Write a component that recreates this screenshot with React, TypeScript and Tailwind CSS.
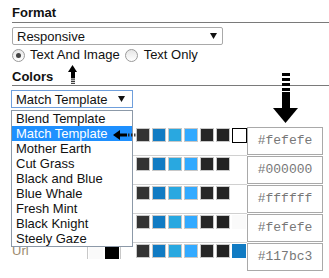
import React from "react";

const themes = [
  "Blend Template",
  "Match Template",
  "Mother Earth",
  "Cut Grass",
  "Black and Blue",
  "Blue Whale",
  "Fresh Mint",
  "Black Knight",
  "Steely Gaze",
];

const base = ["#333333", "#117bc3", "#29a8e0", "#33aaff", "#262626", "#222222"];

interface Row {
  id: string;
  label: string; // rows hidden behind the open list keep no label
  small: string[];
  last: string; // last swatch colour, "" = none
  hex: string;
}

const rows: Row[] = [
  { id: "bg", label: "", small: ["#fafafa", "#000000"], last: "sel", hex: "#fefefe" },
  { id: "border", label: "", small: ["#fafafa", "#000000"], last: "", hex: "#000000" },
  { id: "title", label: "", small: ["#fafafa", "#000000"], last: "", hex: "#ffffff" },
  { id: "text", label: "", small: ["#fafafa", "#000000"], last: "#fafafa", hex: "#fefefe" },
  { id: "url", label: "Url", small: ["#fafafa", "#000000"], last: "#117bc3", hex: "#117bc3" },
];

function Caret() {
  return (
    <svg width="7" height="6" viewBox="0 0 7 6">
      <polygon points="0,0 7,0 3.5,6" fill="#111" />
    </svg>
  );
}

function Radio({ checked }: { checked?: boolean }) {
  return (
    <span className="flex h-[13px] w-[13px] shrink-0 items-center justify-center rounded-full border border-[#9a9a9a] bg-gradient-to-b from-[#e6e6e6] to-white">
      {checked && <span className="h-[5px] w-[5px] rounded-full bg-[#444]" />}
    </span>
  );
}

export default function App() {
  return (
    <div
      className="relative h-[278px] w-[329px] overflow-hidden bg-white text-[13px] text-[#111]"
      style={{ fontFamily: '"Liberation Sans", Arial, sans-serif' }}
    >
      <div className="flex flex-col pl-[12px]">
        <div className="mt-[5px] border-b border-[#7a7a7a] pb-[2px] font-bold leading-[15px]">Format</div>

        <div className="mt-[4px] flex h-[18px] w-[211px] items-center justify-between rounded-[2px] border border-[#a9a9a9] pl-[4px] pr-[5px] leading-[15px]">
          <span>Responsive</span>
          <Caret />
        </div>

        <div className="mt-[3px] flex h-[14px] items-center leading-[14px]">
          <Radio checked />
          <span className="ml-[5px]">Text And Image</span>
          <span className="ml-[5px]">
            <Radio />
          </span>
          <span className="ml-[6px]">Text Only</span>
        </div>

        <div className="mt-[7px] border-b border-[#7a7a7a] pb-[1px] font-bold leading-[15px]">Colors</div>

        <div className="ml-[-1px] mt-[4px] flex h-[18px] w-[122px] items-center justify-between border border-[#6f9fdc] pl-[4px] pr-[7px] leading-[15px]">
          <span>Match Template</span>
          <Caret />
        </div>

        <div className="mt-[19px] flex flex-col">
          {rows.map((r, i) => (
            <div key={r.id} className="flex h-[29px] items-start">
              <div className="w-[75px] shrink-0 leading-[15px] text-[#9c8a6e]">{r.label}</div>
              <div className="mt-[2px] flex h-[14px] shrink-0 gap-[2px] border-x border-[#c8c8c8] px-[1px]">
                {r.small.map((c, j) => (
                  <span key={j} className="h-[14px] w-[14px]" style={{ background: c }} />
                ))}
              </div>
              <div
                className={`ml-[11px] flex h-[29px] w-[115px] shrink-0 gap-[2px] pl-[4px] pt-[1px] ${
                  i < rows.length - 1 ? "border-b border-[#d0d0d0]" : ""
                }`}
              >
                {base.map((c) => (
                  <span key={c} className="h-[14px] w-[14px] border border-[#c8c8c8]" style={{ background: c }} />
                ))}
                {r.last === "sel" ? (
                  <span className="h-[15px] w-[15px] border border-black bg-white" />
                ) : (
                  <span className="h-[14px] w-[14px]" style={{ background: r.last || "transparent" }} />
                )}
              </div>
              <div
                className="h-[28px] w-[76px] shrink-0 border border-[#a9a9a9] text-center text-[13px] leading-[26px] text-[#777]"
                style={{ fontFamily: '"Liberation Mono", "Courier New", monospace' }}
              >
                {r.hex}
              </div>
            </div>
          ))}
        </div>
      </div>

      {/* open dropdown list */}
      <ul className="absolute left-[11px] top-[110px] w-[122px] border border-[#8c99a8] bg-white leading-[15px]">
        {themes.map((t) => (
          <li
            key={t}
            className={`h-[15px] pl-[4px] ${t === "Match Template" ? "bg-[#1e90ff] text-white" : "text-[#111]"}`}
          >
            {t}
          </li>
        ))}
      </ul>

      {/* annotation arrows */}
      <svg className="absolute left-[68px] top-[65px]" width="10" height="19" viewBox="0 0 10 19">
        <polygon points="4.5,0 9,7 0,7" fill="#000" />
        <rect x="3" y="7" width="4" height="6" fill="#000" />
        <rect x="3" y="13.5" width="4" height="1.2" fill="#222" />
        <rect x="3" y="15.7" width="4" height="1.2" fill="#222" />
        <rect x="3" y="17.8" width="4" height="1.2" fill="#444" />
      </svg>

      <svg className="absolute left-[273px] top-[72px]" width="26" height="52" viewBox="0 0 26 52">
        <rect x="9" y="1" width="8" height="3" fill="#000" />
        <rect x="9" y="6" width="8" height="3" fill="#000" />
        <rect x="9" y="11" width="8" height="3" fill="#000" />
        <rect x="9" y="16" width="8" height="3" fill="#000" />
        <rect x="9" y="20" width="8" height="16.5" fill="#000" />
        <polygon points="0,36 25,36 12.5,51" fill="#000" />
      </svg>

      <svg className="absolute left-[112px] top-[129px]" width="26" height="13" viewBox="0 0 26 13">
        <polygon points="1,6 8,1 8,11" fill="#000" />
        <rect x="8" y="4.5" width="7" height="3" fill="#000" />
        <rect x="16" y="4.5" width="1.5" height="3" fill="#222" />
        <rect x="19" y="4.5" width="1.5" height="3" fill="#222" />
        <rect x="22" y="4.5" width="1.5" height="3" fill="#444" />
      </svg>
    </div>
  );
}
